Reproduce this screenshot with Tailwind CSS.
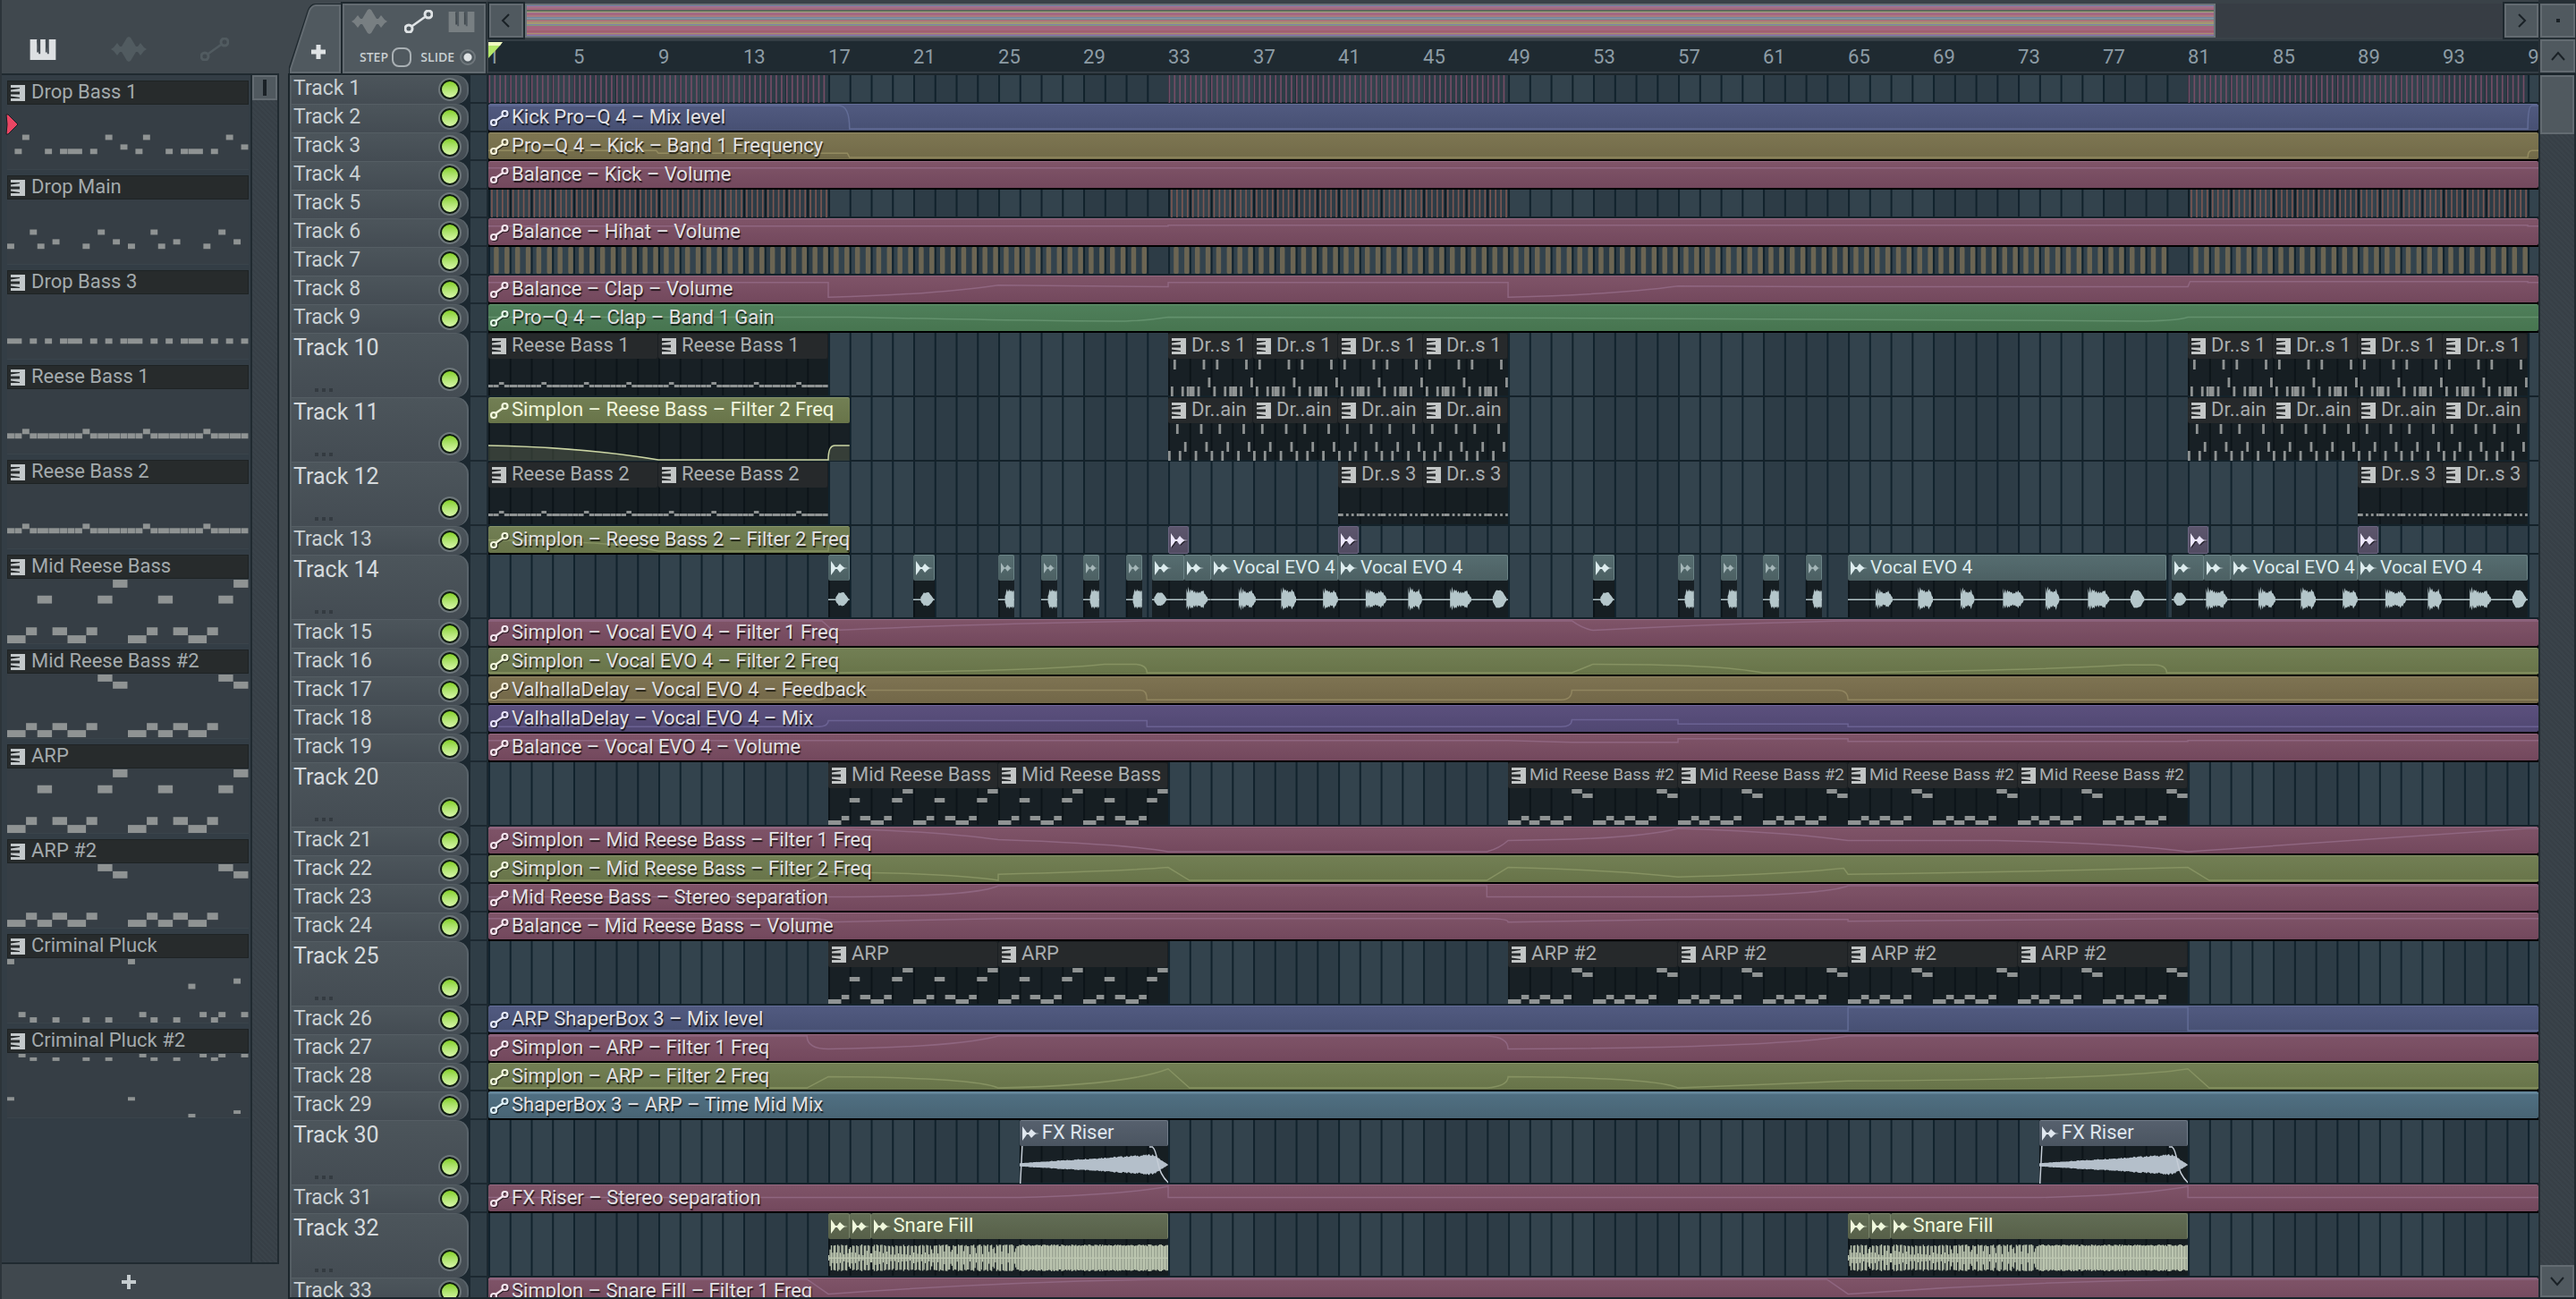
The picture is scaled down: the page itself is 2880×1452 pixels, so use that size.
<!DOCTYPE html>
<html lang="en">
<head>
<meta charset="utf-8">
<title>Playlist</title>
<script src="https://cdn.jsdelivr.net/npm/@tailwindcss/browser@4"></script>
</head>
<body class="h-screen overflow-hidden bg-[#40484e] flex font-['Roboto',sans-serif] text-[#c5ccd0]">

<svg class="hidden" aria-hidden="true">
  <symbol id="i-piano" viewBox="0 0 30 24"><path d="M0 0H8V2L10 14V17H12V0H18V2L20 14V17H22V0H30V24H0Z"/><path d="M8 1L9 1L10 15H8ZM18 1L19 1L20 15H18Z" fill="#40484e"/></symbol>
  <symbol id="i-wave" viewBox="0 0 40 28"><path d="M0 14L3 12L7 7L10 11L12 11L15 6L18 1L20 0L22 1L25 6L28 11L30 11L33 7L37 12L40 14L37 16L33 21L30 17L28 17L25 22L22 27L20 28L18 27L15 22L12 17L10 17L7 21L3 16Z"/></symbol>
  <symbol id="i-auto" viewBox="0 0 32 26"><g fill="none" stroke="currentColor" stroke-width="3"><circle cx="5" cy="21" r="4"/><circle cx="27" cy="5" r="4"/><path d="M9 18L23 8" stroke-width="2.6"/></g></symbol>
  <symbol id="i-autos" viewBox="0 0 21 18"><g fill="none" stroke="currentColor" stroke-width="2.2"><circle cx="4" cy="14" r="3"/><circle cx="16.500" cy="4" r="3"/><path d="M6 12L14.500 6"/></g></symbol>
  <symbol id="i-pat" viewBox="0 0 16 18"><path d="M0 0H16V18H0V15H10V14L0 12.500V10.500H10V7.500H0V5.500L10 4V3H0Z"/></symbol>
  <symbol id="i-clip" viewBox="0 0 19 16"><path d="M0 0L3 4L5 7H7L10 3L13 6L15 7.500L19 8L15 8.500L13 10L10 13L7 9H5L3 12L0 16Z"/></symbol>
</svg>

<aside class="w-[322px] flex-none flex flex-col border-l-2 border-[#2c343a]" aria-label="Picker">
  <div class="h-[82px] flex-none relative flex items-end justify-between pl-[30px] pr-[66px] pb-3">
    <button class="w-[32px] h-[30px] flex items-center text-[#dde0e2]" aria-label="Patterns"><svg class="w-[32px] h-[23px] fill-current"><use href="#i-piano"/></svg></button>
    <button class="w-[40px] h-[30px] flex items-center text-[#515b60]" aria-label="Audio clips"><svg class="w-[40px] h-[28px] fill-current"><use href="#i-wave"/></svg></button>
    <button class="w-[32px] h-[30px] flex items-center text-[#515b60]" aria-label="Automation clips"><svg class="w-[32px] h-[26px]"><use href="#i-auto"/></svg></button>
  </div>
  <div class="flex-1 min-h-0 mr-[10px] flex border-2 border-l-0 border-[#202a30] bg-[#333d45]">
    <div id="picker" class="flex-1 min-w-0 pl-[6px] pr-[2px] pt-[6px] flex flex-col gap-[6px] overflow-hidden"></div>
    <div class="w-[30px] flex-none border-l-2 border-[#202a30] bg-[repeating-linear-gradient(45deg,#373f46_0_2px,#3a434a_2px_4px)]">
      <div class="h-[28px] border-2 border-[#636b71] bg-[#50595f] flex items-center justify-center"><div class="w-1 h-[18px] bg-[#1a2126]"></div></div>
    </div>
  </div>
  <div class="h-[39px] flex-none flex items-center justify-center pr-9">
    <button class="w-6 h-6 flex items-center justify-center" aria-label="Add"><svg class="w-4 h-4 stroke-[#c5cccf]" stroke-width="4" viewBox="0 0 16 16"><path d="M8 0V16M0 8H16"/></svg></button>
  </div>
</aside>

<main class="flex-1 min-w-0 flex flex-col">
  <header class="h-[84px] flex-none flex border-b-2 border-[#1b252b]">
    <div class="w-[222px] flex-none flex pt-[3px]">
      <button class="w-[61px] h-[79px] relative" aria-label="Add track">
        <svg class="w-[61px] h-[79px]" viewBox="0 0 61 79"><path d="M1 79V72L22 8Q25 1 30 1H61V79Z" fill="#1e282e"/><path d="M3 78V74L24 9Q27 3 31 3H58V78Z" fill="#50595f" stroke="#636b71" stroke-width="2"/><path d="M34 47V63M26 55H42" stroke="#dfe3e5" stroke-width="5"/></svg>
      </button>
      <div class="w-[160px] h-[78px] mt-px border-2 border-[#636b71] bg-[#50595f] flex flex-col justify-between pt-1 pb-1 outline-2 outline-[#1e282e]">
        <div class="flex items-center justify-between pl-[7px] pr-[10px]">
          <button class="text-[#787f82]" aria-label="Audio clip mode"><svg class="w-[42px] h-[28px] fill-current"><use href="#i-wave"/></svg></button>
          <button class="text-[#dfe3e5]" aria-label="Automation clip mode"><svg class="w-[32px] h-[26px]"><use href="#i-auto"/></svg></button>
          <button class="text-[#787f82]" aria-label="Pattern clip mode"><svg class="w-[30px] h-[23px] fill-current"><use href="#i-piano"/></svg></button>
        </div>
        <div class="flex items-center justify-between pl-[17px] pr-[9px] font-['Open_Sans'] font-semibold text-[14px] leading-6 text-[#c9cfd2]">
          <label class="flex items-center gap-1">STEP<input type="checkbox" class="appearance-none w-[22px] h-[22px] rounded-lg border-2 border-[#a9b0b4]"></label>
          <label class="flex items-center gap-[6px]">SLIDE<input type="radio" class="appearance-none w-[18px] h-[18px] rounded-full border-2 border-[#70787d] bg-[radial-gradient(circle,#dfe3e5_0_4px,transparent_5px)]"></label>
        </div>
      </div>
    </div>
    <div class="flex-1 min-w-0 flex flex-col bg-[#3a4248]">
      <div class="h-[44px] flex-none flex pt-[4px] pb-[2px]">
        <button class="w-[38px] border-2 border-[#636b71] bg-[#50595f] outline-2 outline-[#1e282e] ml-[3px] flex items-center justify-center" aria-label="Scroll left"><svg class="w-3 h-4 fill-none stroke-[#1a2126]" stroke-width="2" viewBox="0 0 12 16"><path d="M9 1L2 8L9 15"/></svg></button>
        <div class="flex-1 min-w-0 ml-[2px] bg-[#373d44] flex">
          <div id="mini" class="w-[85.4%] border-2 border-[#6c7479] flex flex-col"></div>
        </div>
        <button class="w-[38px] border-2 border-[#636b71] bg-[#50595f] outline-2 outline-[#1e282e] flex items-center justify-center" aria-label="Scroll right"><svg class="w-3 h-4 fill-none stroke-[#1a2126]" stroke-width="2" viewBox="0 0 12 16"><path d="M3 1L10 8L3 15"/></svg></button>
      </div>
      <div id="ruler" class="flex-1 ml-[2px] relative overflow-hidden bg-[#1f2a31] border-y-2 border-[#333d44] text-[22px] leading-[36px] text-[#8d9ca5]">
        <svg class="absolute left-0 top-0 w-4 h-5 z-10" viewBox="0 0 16 20"><path d="M0 1H15L13 5L0 19Z" fill="#b5e86a"/><path d="M0 1H16L13 5H0Z" fill="#f0f8c0"/></svg>
      </div>
    </div>
    <div class="w-[42px] flex-none flex flex-col gap-[2px] pt-[4px] pl-[2px] pr-[1px] bg-[#262f35]">
      <button class="h-[38px] border-2 border-[#636b71] bg-[#50595f] flex items-center justify-center" aria-label="Zoom"><span class="w-1 h-1 bg-[#1a2126]"></span></button>
      <button class="h-[37px] border-2 border-[#636b71] bg-[#50595f] flex items-center justify-center" aria-label="Scroll up"><svg class="w-4 h-3 fill-none stroke-[#1a2126]" stroke-width="2" viewBox="0 0 16 12"><path d="M1 10L8 2L15 10"/></svg></button>
    </div>
  </header>
  <div class="flex-1 min-h-0 flex border-b-2 border-[#1b252b]">
    <div class="flex-1 min-w-0 relative overflow-hidden bg-[#1c2830] border-l-2 border-[#1b252b]">
      <div class="absolute left-[222px] right-0 top-0 bottom-0" id="grid"></div>
      <div id="tracks" class="relative"></div>
    </div>
    <div class="w-[42px] flex-none flex flex-col border-x-2 border-[#202a30] bg-[repeating-linear-gradient(45deg,#373f46_0_2px,#3a434a_2px_4px)]">
      <div class="h-[66px] border-2 border-[#636b71] bg-[#50595f]"></div>
      <div class="flex-1"></div>
      <button class="h-[36px] border-2 border-[#636b71] bg-[#50595f] flex items-center justify-center" aria-label="Scroll down"><svg class="w-4 h-3 fill-none stroke-[#1a2126]" stroke-width="2" viewBox="0 0 16 12"><path d="M1 2L8 10L15 2"/></svg></button>
    </div>
  </div>
</main>

<script>
const BARS = 96.5;
const pct = v => (v / BARS * 100).toFixed(4) + '%';

// Notes are [step, length, row]; a pattern is 32 steps long.
const drop1 = [[1,1,2],[2,1,0],[5,1,2],[7,1,2],[8,2,2],[11,1,2],[13,1,0],[15,1,1],[17,1,2],[18,1,0],[21,1,2],[23,1,2],[24,2,2],[27,1,2],[29,1,0],[31,1,1]];
const dropMain = [[0,1,2],[3,1,0],[4,1,2],[6,1,1],[10,1,2],[12,1,0],[14,1,1],[16,1,2],[19,1,0],[20,1,2],[22,1,1],[26,1,2],[28,1,0],[30,1,1]];
const drop3 = [[0,2,0],[3,1,0],[5,1,0],[7,1,0],[8,2,0],[11,1,0],[13,1,0],[15,1,0],[16,2,0],[19,1,0],[21,1,0],[23,1,0],[24,2,0],[27,1,0],[29,1,0],[31,1,0]];
const reese = [];
for (let o = 0; o < 32; o += 8) reese.push([o,1,1],[o+1,1,1],[o+2,1,0],[o+3,1,1],[o+4,1.5,1],[o+5.5,1.5,1],[o+7,1,1]);
const mid = [], mid2 = [];
for (let o = 0; o < 32; o += 16) {
  mid.push([o,2.5,3],[o+2.5,1.5,2],[o+4,2,1],[o+6,2,2],[o+8,2.5,3],[o+10.5,1.5,2],[o+12,2,1],[o+14,2,0]);
  mid2.push([o,2.5,3],[o+2.5,1.5,2],[o+4,2,3],[o+6,2,2],[o+8,2.5,3],[o+10.5,1.5,2],[o+12,2,0],[o+14,2,1]);
}
const pluck = [[0,1,0],[16,1,0],[24,1,2],[30,1,1]];
[[1.5,3],[3,4],[6,4],[10,4],[13,4],[17.5,3],[19,4],[22,4],[25.5,3],[27,4],[28,3],[31,3]].forEach(([s,r]) => pluck.push([s,1,r]));
const midRows = { pick: [[1,19,55,64],9], clip: [[1,11,31,36],5] };
const mid2Rows = { pick: [[1,9,56,64],8], clip: [[1,6,31,36],5] };
const dropRows = { pick: [[34,45,50],6], clip: [[1,21,31],11] };
const reeseRows = { pick: [[45,50],6], clip: [[26,29],3] };
const P = {
  'Drop Bass 1': [drop1, dropRows], 'Drop Main': [dropMain, dropRows],
  'Drop Bass 3': [drop3, { pick: [[50],6], clip: [[29],3] }],
  'Reese Bass 1': [reese, reeseRows], 'Reese Bass 2': [reese, reeseRows],
  'Mid Reese Bass': [mid, midRows], 'Mid Reese Bass #2': [mid2, mid2Rows],
  'ARP': [mid, midRows], 'ARP #2': [mid2, mid2Rows],
  'Criminal Pluck': [pluck, { pick: [[1,23,29,61,67],6] }],
  'Criminal Pluck #2': [pluck, { pick: [[50,65,69,1,5],4] }],
};
const notes = (name, kind, h) => {
  const [list, rows] = P[name], [ys, nh] = rows[kind];
  const r = list.map(([s,l,y]) => `<rect x="${s*10}" y="${ys[y]}" width="${l*10-0.6}" height="${nh}"/>`).join('');
  return `<svg class="block w-full h-full fill-[#8f9393]" viewBox="0 0 320 ${h}" preserveAspectRatio="none">${r}</svg>`;
};

document.getElementById('picker').innerHTML = Object.keys(P).map((n, i) => `
  <div class="flex-none relative">
    <div class="h-[27px] flex items-center gap-[7px] pl-[3px] bg-[#272b2c] border border-[#1e2324]">
      <svg class="w-4 h-[18px] flex-none fill-[#c3c8ca]"><use href="#i-pat"/></svg>
      <span class="text-[22px] leading-[24px] whitespace-nowrap text-[#a3aaad] pb-[2px]">${n}</span>
    </div>
    <div class="h-[73px] bg-[#363e45] border-b border-[#3a444b]">${notes(n, 'pick', 73)}</div>
    ${i === 0 ? '<svg class="absolute -left-[2px] top-[37px] w-4 h-6" viewBox="0 0 16 24" preserveAspectRatio="none"><path d="M1 1Q3 12 1 23L3 23L14 12L3 1Z" fill="#ea4663" stroke="#1a1f24" stroke-width="1"/></svg>' : ''}
  </div>`).join('');

const mini = [[1,'#7d84ad'],[1,'#a8698a'],[1,'#9c7a85'],[1,'#a5667f'],[1,'#59645a'],[1,'#66735f'],[1,'#a6a07a'],[1,'#9d6f90'],[2,'#a5667f'],[1,'#a97b7f'],[1,'#6f86a0'],[1,'#8c8fa8'],[1,'#6d9590'],[1,'#a5667f'],[2,'#a98377'],[1,'#a39a72'],[1,'#7f80aa'],[1,'#7f9a78'],[5,'#a5667f'],[1,'#a0606f'],[1,'#a5667f'],[1,'#a9906f'],[1,'#9c6f88'],[1,'#8479b0']];
document.getElementById('mini').innerHTML = mini.map(([g, c]) => `<div class="w-full" style="flex:${g} 1 0;background:${c}"></div>`).join('');

let ruler = '';
for (let b = 0; b <= 96; b += 4) ruler += `<span class="absolute top-0" style="left:${pct(b)}">${b + 1}</span>`;
document.getElementById('ruler').insertAdjacentHTML('beforeend', ruler);

let g = '';
for (let b = 0; b < BARS; b += 4) g += `<rect x="${b}" width="4" height="1" fill="${(b / 4) % 2 ? '#2d3c46' : '#33434d'}"/>`;
for (let b = 0; b < BARS; b++) g += `<rect x="${b}" width="0.084" height="1" fill="#11222c"/>`;
document.getElementById('grid').innerHTML = `<svg class="block w-full h-full" viewBox="0 0 ${BARS} 1" preserveAspectRatio="none">${g}</svg>`;

const C = {
  pink:  ['bg-linear-to-b from-[#7f5468] to-[#73485d] border-[#946880]', '#8f6680', '#f3e3ec'],
  blue:  ['bg-linear-to-b from-[#515a80] to-[#475073] border-[#646e97]', '#626c96', '#e4e8f8'],
  gold:  ['bg-linear-to-b from-[#7e7652] to-[#716a48] border-[#938b66]', '#938b60', '#f5f1d8'],
  green: ['bg-linear-to-b from-[#4f7f5a] to-[#477550] border-[#63946e]', '#63916d', '#e0f5e4'],
  lime:  ['bg-linear-to-b from-[#727f54] to-[#687449] border-[#87956a]', '#869262', '#f1f6dc'],
  tan:   ['bg-linear-to-b from-[#7e7352] to-[#726748] border-[#938766]', '#90855f', '#f5eed8'],
  violet:['bg-linear-to-b from-[#5b507d] to-[#504772] border-[#70659a]', '#6b6293', '#e6e0f8'],
  teal:  ['bg-linear-to-b from-[#507083] to-[#486474] border-[#6689a0]', '#6a8b9f', '#def0f8'],
};
const autoClip = (c, name, curve, len = BARS) => `
  <div class="absolute top-0 h-8 bg-black pb-[2px]" style="left:0;width:${pct(len)}">
    <div class="relative h-[30px] rounded-xs border-t ${C[c][0]} overflow-hidden">
      <svg class="absolute inset-0 w-full h-full fill-none" viewBox="0 0 ${len} 30" preserveAspectRatio="none"><path d="${curve}" stroke="${C[c][1]}" stroke-width="1.500" vector-effect="non-scaling-stroke"/></svg>
      <div class="relative flex items-center h-[29px] pl-[2px] gap-[3px]" style="color:${C[c][2]}">
        <svg class="w-[21px] h-[18px] flex-none overflow-visible drop-shadow-[1px_1px_0_#0009]"><use href="#i-autos"/></svg>
        <span class="text-[22px] leading-[26px] pb-[2px] whitespace-nowrap text-[#e2e1e4] [text-shadow:1px_2px_1px_#000b]">${name}</span>
      </div>
    </div>
  </div>`;
const pat = (at, len, name, label) => `
  <div class="absolute top-0 h-[70px] bg-[#0a0e10]/65" style="left:${pct(at)};width:${pct(len)}">
    <div class="h-[29px] flex items-center ${name.length > 14 ? 'gap-1' : 'gap-[6px]'} pl-[4px] rounded-xs bg-[#26292b] border-t border-[#1b1f22] shadow-[inset_-1px_0_0_#1b1f22]">
      <svg class="w-4 h-[18px] flex-none fill-[#c3c6c6]"><use href="#i-pat"/></svg>
      <span class="${name.length > 14 ? 'text-[19px]' : 'text-[22px]'} leading-[26px] pb-[3px] whitespace-nowrap text-[#a9adaf]">${label || name}</span>
    </div>
    <div class="h-[42px]">${notes(name, 'clip', 42)}</div>
  </div>`;
const A = {
  vocal: ['bg-linear-to-b from-[#566d70] to-[#4c6063] border-[#6b8386]', 'fill-[#b4c6ca]', 'text-[#dcebed]', 'text-[21px]'],
  riser: ['bg-linear-to-b from-[#56606d] to-[#4b5561] border-[#707b88]', 'fill-[#b4bfca]', 'text-[#dfe6ee]', 'text-[22px]'],
  snare: ['bg-linear-to-b from-[#626d55] to-[#576049] border-[#78836a]', 'fill-[#bcc6b0]', 'text-[#f0f8dc]', 'text-[22px]'],
};
const audio = (k, at, len, label, wave) => `
  <div class="absolute top-0 h-[70px] bg-[#0a0e10]/65" style="left:${pct(at)};width:${pct(len)}">
    <div class="h-[29px] flex items-center gap-[3px] pl-[3px] rounded-xs border-t border-r ${A[k][0]} ${A[k][2]}">
      <svg class="w-[19px] h-4 ${len < 1 ? 'shrink opacity-60' : 'flex-none'}"><use href="#i-clip" fill="currentColor"/></svg>
      ${label ? `<span class="${A[k][3]} leading-[26px] pb-[3px] whitespace-nowrap">${label}</span>` : ''}
    </div>
    <svg class="block w-full h-[42px] ${A[k][1]}" viewBox="0 0 ${len} 42" preserveAspectRatio="none">${wave}</svg>
  </div>`;
const fxClip = at => `
  <div class="absolute top-0 h-[31px] rounded-xs border border-[#6b6480] bg-linear-to-b from-[#5d566d] to-[#524c62] flex items-center pl-[2px] overflow-hidden" style="left:${pct(at)};width:${pct(0.98)}">
    <svg class="w-[19px] h-4 flex-none fill-[#ece6fb] drop-shadow-[1px_1px_0_#0009]"><use href="#i-clip"/></svg>
  </div>`;

// Deterministic noise keeps the waveforms the same on every load.
const rnd = i => { const x = Math.sin(i * 12.9898) * 43758.5453; return x - Math.floor(x); };
const blob = (x, w, amp, kind) => {
  const n = Math.max(12, Math.round(w * 20)), top = [], bot = [];
  for (let i = 0; i <= n; i++) {
    const t = i / n;
    let e;
    if (kind === 'round') e = Math.min(1, 0.3 + t * 3, (1 - t) * 2.4 + 0.15);
    else if (kind === 'cut') e = Math.min(1, 0.35 + t * 4);
    else e = t < 0.2 ? (i % 2 ? 0.7 : 1.1) : Math.min(0.85 + 0.15 * Math.sin(t * 9), (1 - t) * 3 + 0.2);
    const spike = kind === 'round' ? 0.9 : (i % 2 ? 0.78 : 1);
    e = e * amp * spike * (0.85 + 0.15 * rnd(i * 3 + w * 7));
    const px = (x + w * t).toFixed(3);
    top.push(px + ',' + (21 - e).toFixed(1));
    bot.unshift(px + ',' + (21 + e * (0.85 + 0.15 * rnd(i))).toFixed(1));
  }
  return `<polygon points="${top.concat(bot).join(' ')}"/>`;
};
const mline = len => `<rect x="0" y="20.500" width="${len}" height="1.500"/>`;
const blobs = (len, list) => mline(len) + list.map(b => blob(...b)).join('');
const v = (at, len, label, list) => audio('vocal', at, len, label, blobs(len, list));
const vSmall = at => v(at, 1, '', [[0.35, 0.6, 9, 'round']]);
const vCut = at => v(at, 0.76, '', [[0.32, 0.43, 12, 'cut']]);
const vIntro = at => v(at, 1.5, '', [[0.1, 0.58, 9, 'round']]) + v(at + 1.5, 1.25, '', [[0.1, 1, 13, 'hit']])
  + v(at + 2.75, 6, 'Vocal EVO 4', [[1.3,0.8,13,'hit'],[3.3,0.7,14,'hit'],[5.27,0.7,13,'hit']])
  + v(at + 8.75, 8, 'Vocal EVO 4', [[1.3,0.97,12,'hit'],[3.3,0.65,14,'hit'],[5.27,1,13,'hit'],[7.28,0.65,12,'round']]);

const riser = at => {
  const top = [], bot = [];
  for (let i = 0; i <= 140; i++) {
    const t = i / 140, e = (t < 0.9 ? 2 + t * 11.5 : 12 * (1 - (t - 0.9) / 0.1)) * (0.82 + 0.18 * rnd(i));
    top.push((7 * t).toFixed(3) + ',' + (21 - e).toFixed(1)); bot.unshift((7 * t).toFixed(3) + ',' + (21 + e * 0.95).toFixed(1));
  }
  return audio('riser', at, 7, 'FX Riser', `<polygon points="${top.concat(bot).join(' ')}"/><path d="M0.03 42L0.12 0M6.100 1H6.250Q6.400 4 6.500 18T7 41" fill="none" stroke="#c4ccd6" stroke-width="1.500" vector-effect="non-scaling-stroke"/>`);
};
const fill = (from, len) => {
  let r = '';
  const step = 0.06;
  for (let x = 0; x < len; x += step) {
    const t = from + x, k = Math.round(t / step);
    const gap = t < 5 ? (k % 3 === 0) : t < 9 ? (k % 5 === 0) : false;
    const h = gap ? 3 + 5 * rnd(k) : 13 + 2 * rnd(k + 4) - (t < 9 ? 5 * (k % 16 < 3) * rnd(k) : 0);
    r += `<rect x="${x.toFixed(3)}" y="${(21 - h).toFixed(1)}" width="${t < 9 ? 0.056 : 0.064}" height="${(2 * h).toFixed(1)}"/>`;
  }
  return r + mline(len);
};
const snare = at => audio('snare', at, 1, '', fill(0, 1)) + audio('snare', at + 1, 1, '', fill(1, 1)) + audio('snare', at + 2, 14, 'Snare Fill', fill(2, 14));

// Short one-shot hits drawn as thin stripes over a range of bars.
const hits = (ranges, step, off, w, color, r) => {
  let s = '';
  ranges.forEach(([a, b]) => { for (let x = a; x < b - 0.01; x += step) s += `<rect x="${(x + off).toFixed(3)}" y="0" width="${w}" height="${r ? 30 : 31}" rx="${r ? 0.06 : 0}" ry="${r ? 2 : 0}" fill="${color}"/>`; });
  return `<svg class="absolute inset-x-0 top-0 w-full h-8" viewBox="0 0 ${BARS} 32" preserveAspectRatio="none">${s}</svg>`;
};
const three = [[0,16],[32,48],[80,96]];
const rep = (ats, len, name, label) => ats.map(a => pat(a, len, name, label)).join('');

const T = [
  hits(three, 0.25, 0.02, 0.07, '#744d66'),
  autoClip('blue', 'Kick Pro–Q 4 – Mix level', 'M0 1H16.500Q17 1 17 28H96Q96 1 96.200 1H96.500'),
  autoClip('gold', 'Pro–Q 4 – Kick – Band 1 Frequency', 'M0 20H7.900L8 23H16.900L17 28H96Q96 20 96.200 20H96.500'),
  autoClip('pink', 'Balance – Kick – Volume', 'M0 7H97'),
  hits(three, 0.25, 0.13, 0.07, '#7b5753') + hits(three, 1, 0.02, 0.05, '#0d1a21'),
  autoClip('pink', 'Balance – Hihat – Volume', 'M0 8H32V7H96V8H97'),
  hits([[0,31],[32,79],[80,96]], 0.5, 0.26, 0.23, '#6b6553', true),
  autoClip('pink', 'Balance – Clap – Volume', 'M0 7H16V24Q21 21 24 10L32 12V7H48V24Q53 21 56 11L64 12H80L80.100 6H96V7H97'),
  autoClip('green', 'Pro–Q 4 – Clap – Band 1 Gain', 'M0 14H17Q27 19 30 18.500Q31 18 32 14L50 15Q70 19 78 18.500Q79.500 18 80 14H97'),
  rep([0,8], 8, 'Reese Bass 1') + rep([32,36,40,44,80,84,88,92], 4, 'Drop Bass 1', 'Dr..s 1'),
  `<div class="absolute top-0 h-[70px] bg-[#0a0e10]/65" style="left:0;width:${pct(17)}">
    <div class="h-[29px] flex items-center gap-[3px] pl-[2px] rounded-xs border-t ${C.lime[0]}" style="color:${C.lime[2]}">
      <svg class="w-[21px] h-[18px] flex-none"><use href="#i-autos"/></svg><span class="text-[22px] leading-[26px] pb-[3px] whitespace-nowrap">Simplon – Reese Bass – Filter 2 Freq</span>
    </div>
    <svg class="block w-full h-[42px]" viewBox="0 0 17 42" preserveAspectRatio="none"><path d="M0 25Q4.500 27 8 41H16Q16 25 16.300 25H17V42H0Z" fill="#5b6350" fill-opacity=".45"/><path d="M0 25Q4.500 27 8 41H16Q16 25 16.300 25H17" fill="none" stroke="#ccd6a4" stroke-width="1.500" vector-effect="non-scaling-stroke"/></svg>
  </div>` + rep([32,36,40,44,80,84,88,92], 4, 'Drop Main', 'Dr..ain'),
  rep([0,8], 8, 'Reese Bass 2') + rep([40,44,88,92], 4, 'Drop Bass 3', 'Dr..s 3'),
  autoClip('lime', 'Simplon – Reese Bass 2 – Filter 2 Freq', 'M0 15Q6 16 8 28H16Q16 15 16.300 15H17', 17) + [32,40,80,88].map(fxClip).join(''),
  vSmall(16) + vSmall(20) + [24,26,28,30].map(vCut).join('') + vIntro(31.25) + vSmall(52) + [56,58,60,62].map(vCut).join('')
    + v(64, 15, 'Vocal EVO 4', [[1.3,0.8,12,'hit'],[3.3,0.7,14,'hit'],[5.3,0.65,13,'hit'],[7.3,0.97,12,'hit'],[9.3,0.65,14,'hit'],[11.3,1,13,'hit'],[13.3,0.65,12,'round']]) + vIntro(79.25),
  autoClip('pink', 'Simplon – Vocal EVO 4 – Filter 1 Freq', 'M0 1H15.700L16.200 12Q22 5 31 1H51Q51.500 10 52 12Q58 4 64 1H97'),
  autoClip('lime', 'Simplon – Vocal EVO 4 – Filter 2 Freq', 'M0 28H16Q26 26 29 18H30.500Q31 19 31 28H51L52 18Q58 18 60 28H64Q74 24 77 19H78.500Q79 20 79 28H97'),
  autoClip('tan', 'ValhallaDelay – Vocal EVO 4 – Feedback', 'M0 26H15.500Q16 26 16 15H30.700Q31 15 31 26H50.500Q51 26 51 15H63.500Q64 15 64 26H97'),
  autoClip('violet', 'ValhallaDelay – Vocal EVO 4 – Mix', 'M0 24H15.500Q16 24 16 17H31V24H50.500Q51 24 51 16H56V21H64V24H97'),
  autoClip('pink', 'Balance – Vocal EVO 4 – Volume', 'M0 7H48L51 9H56V5H64V8H80V7H97'),
  rep([16,24], 8, 'Mid Reese Bass') + rep([48,56,64,72], 8, 'Mid Reese Bass #2'),
  autoClip('pink', 'Simplon – Mid Reese Bass – Filter 1 Freq', 'M0 1H16Q21 4 24 14Q30 19 32 28H47Q47.600 24 48 15Q54 14 56 1Q61 5 64 15H71Q77 18 80 28L96 1H97'),
  autoClip('lime', 'Simplon – Mid Reese Bass – Filter 2 Freq', 'M0 28H15L16 18Q22 20 24 28V21Q30 17 32 13L33 28H47L48 13Q53 16 56 24Q61 21 63.800 14L64 21Q73 18 80 13L81 28H97'),
  autoClip('pink', 'Mid Reese Bass – Stereo separation', 'M0 14H16Q23 14 24 1H47V14H56Q63 12 64 1H97'),
  autoClip('pink', 'Balance – Mid Reese Bass – Volume', 'M0 6H15Q16 6 16 10L24 6H47Q48 6 48 10L56 7H64V9L80 6H97'),
  rep([16,24], 8, 'ARP') + rep([48,56,64,72], 8, 'ARP #2'),
  autoClip('blue', 'ARP ShaperBox 3 – Mix level', 'M0 28H64V1H80V28H97'),
  autoClip('pink', 'Simplon – ARP – Filter 1 Freq', 'M0 1H15Q15 16 16 16Q22 14 24 1H47Q48 2 48 16Q60 15 64 1H97'),
  autoClip('lime', 'Simplon – ARP – Filter 2 Freq', 'M0 28H15L16 15Q23 16 24 28Q30 25 32 6L33 28H47Q48 26 48 15Q55 16 56 28L64 20Q77 18 80 6L81 28H97'),
  autoClip('teal', 'ShaperBox 3 – ARP – Time Mid Mix', 'M0 1H97'),
  riser(25) + riser(73),
  autoClip('pink', 'FX Riser – Stereo separation', 'M0 14H25Q30 11 32 1V14H73Q78 11 80 1V14H97'),
  snare(16) + snare(64),
  autoClip('pink', 'Simplon – Snare Fill – Filter 1 Freq', 'M0 1H15L16 18Q24 4 32 1H63L64 18Q72 4 80 1H97'),
];
const tall = new Set([10, 11, 12, 14, 20, 25, 30, 32]);
document.getElementById('tracks').innerHTML = T.map((lane, i) => {
  const n = i + 1, big = tall.has(n);
  return `<div class="flex ${big ? 'h-[72px]' : 'h-8'}">
    <div class="w-[200px] flex-none relative flex justify-between rounded-r-[14px] border-t border-l-2 border-[#555e64] border-r-2 border-r-[#59636a] bg-linear-to-b from-[#4c555b] to-[#444c53] pl-[2px] pr-[8px]">
      <span class="${big ? 'text-[25px] leading-[32px] text-[#d5dadd]' : 'text-[23px] leading-[28px] text-[#c9d0d3]'} whitespace-nowrap" id="t${n}">Track ${n}</span>
      <input type="checkbox" checked aria-labelledby="t${n}" class="appearance-none flex-none w-[22px] h-[22px] rounded-full border-2 border-[#0f1c10] outline-2 outline-[#6e777b] bg-linear-to-b from-[#86d020] to-[#d9f8a8] ${big ? 'mt-[40px]' : 'mt-[4px]'}">
      ${big ? '<div class="absolute left-[26px] bottom-[6px] flex gap-1"><i class="w-1 h-1 bg-[#343b41]"></i><i class="w-1 h-1 bg-[#343b41]"></i><i class="w-1 h-1 bg-[#343b41]"></i></div>' : ''}
    </div>
    <div class="w-[18px] flex-none ml-[2px] mr-[2px] bg-[#2f3d46] border-b-2 border-[#1c2830]"></div>
    <div class="flex-1 min-w-0 relative border-b-2 border-[#14222a]">${lane}</div>
  </div>`;
}).join('');
</script>
</body>
</html>
